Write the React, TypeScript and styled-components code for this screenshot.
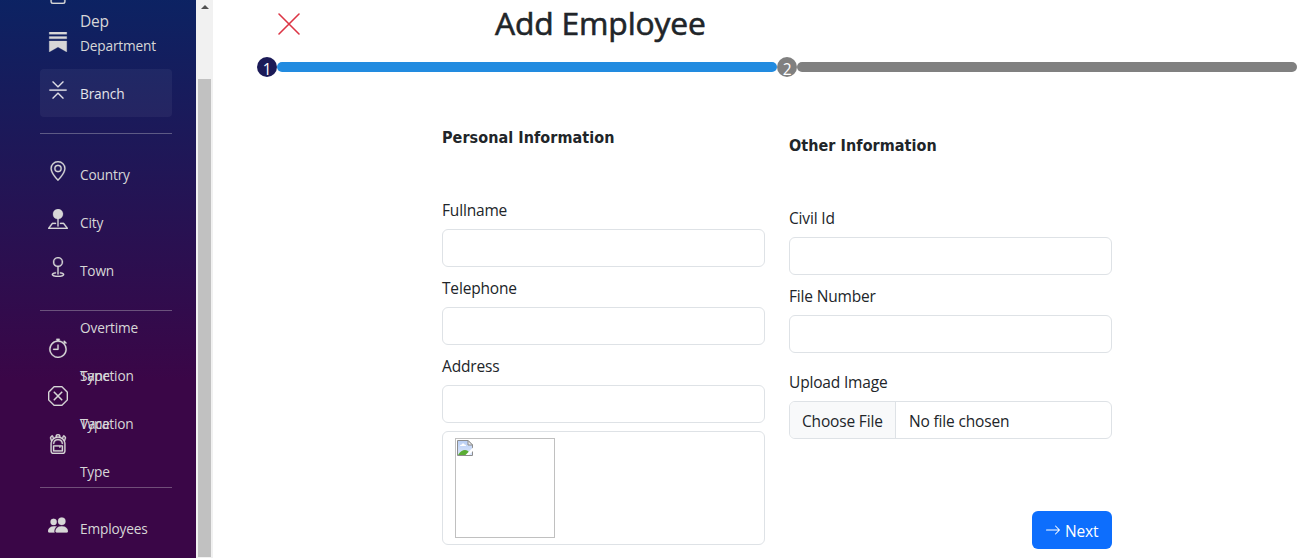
import React from "react";
import styled, { createGlobalStyle } from "styled-components";
import {
  BsArrowRight,
  BsBackpack3,
  BsChevronBarContract,
  BsFile,
  BsGeo,
  BsGeoAlt,
  BsPeopleFill,
  BsPinMapFill,
  BsStopwatch,
  BsSubstack,
  BsXOctagon,
} from "react-icons/bs";

const GlobalStyle = createGlobalStyle`
  *, *::before, *::after { box-sizing: border-box; }
  body {
    margin: 0;
    overflow: hidden;
    background: #fff;
    color: #212529;
    font: 400 15.5px/24px "Segoe UI", "Open Sans", "Noto Sans", sans-serif;
    letter-spacing: -0.17px;
  }
`;

const Page = styled.div`
  display: flex;
  height: 558px;
  overflow: hidden;
`;

const Sidebar = styled.aside`
  width: 196px;
  flex: none;
  padding: 0 24px 0 40px;
  overflow: hidden;
  background: linear-gradient(180deg, rgb(5, 39, 103) -60px, #3a0647 380px);
`;

const Nav = styled.nav`
  display: flex;
  flex-direction: column;
  margin-top: -27px;
`;

const NavItem = styled.a<{ $active?: boolean }>`
  display: flex;
  align-items: center;
  flex: none;
  height: 48px;
  padding-left: 8px;
  gap: 12px;
  border-radius: 4px;
  color: ${(p) => (p.$active ? "#e4e4ea" : "#d7d7d7")};
  background: ${(p) => (p.$active ? "rgba(255, 255, 255, 0.05)" : "transparent")};

  svg {
    flex: none;
    width: 20px;
    height: 20px;
    margin-bottom: 6px;
    stroke: currentColor;
    stroke-width: 0.2px;
  }
`;

const NavLabel = styled.span<{ $large?: boolean }>`
  padding-top: ${(p) => (p.$large ? 0 : 2)}px;
  font-size: ${(p) => (p.$large ? 15.5 : 13.7)}px;
  line-height: 48px;
  white-space: nowrap;
`;

const Divider = styled.hr`
  width: 100%;
  height: 1px;
  margin: 16px 0;
  border: 0;
  background: rgba(215, 215, 215, 0.35);
`;

const ScrollTrack = styled.div`
  display: flex;
  flex-direction: column;
  align-items: center;
  width: 17px;
  flex: none;
  padding: 5px 2px 1px;
  background: #f1f1f1;
`;

const ScrollArrow = styled.span`
  border: 4px solid transparent;
  border-top: 0;
  border-bottom-color: #505050;
`;

const ScrollThumb = styled.div`
  width: 13px;
  flex: 1;
  margin-top: 70px;
  background: #c1c1c1;
`;

const Main = styled.main`
  flex: 1;
  min-width: 0;
  padding-left: 44px;
`;

const Header = styled.header`
  display: flex;
  align-items: center;
  height: 48px;
  padding-left: 18px;
`;

const CloseButton = styled.button`
  display: flex;
  padding: 0;
  border: 0;
  background: none;
  color: #dc3545;
`;

const Title = styled.h2`
  margin: -2px 0 0 192px;
  font-size: 31.8px;
  font-weight: 400;
  line-height: 38px;
  white-space: nowrap;
  -webkit-text-stroke: 0.6px currentColor;
`;

const Steps = styled.div`
  display: flex;
  align-items: center;
  height: 20px;
  margin-top: 9px;
`;

const StepNumber = styled.div<{ $active?: boolean }>`
  width: 20px;
  height: 20px;
  border-radius: 50%;
  background: ${(p) => (p.$active ? "#1b1a57" : "#808080")};
  color: #fff;
  font-size: 15.5px;
  line-height: 24px;
  text-align: center;
`;

const StepBar = styled.div<{ $active?: boolean }>`
  width: 500px;
  height: 10px;
  border-radius: 5px;
  background: ${(p) => (p.$active ? "#228be0" : "#808080")};
`;

const Form = styled.form`
  display: flex;
  gap: 24px;
  padding: 48px 0 0 185px;
`;

const Column = styled.section<{ $offset?: number }>`
  display: flex;
  flex-direction: column;
  width: 323px;
  padding-top: ${(p) => p.$offset ?? 0}px;
`;

const SectionTitle = styled.h3`
  margin: 1px 0 47px;
  font: 700 16px/24px Tahoma, "DejaVu Sans Condensed", sans-serif;
  letter-spacing: 0.06px;
`;

const Field = styled.label<{ $gap?: number }>`
  display: flex;
  flex-direction: column;
  gap: 7px;
  padding-top: 1px;
  margin-bottom: ${(p) => p.$gap ?? 8}px;
`;

const TextInput = styled.input`
  width: 100%;
  height: 38px;
  padding: 6px 12px;
  border: 1px solid #dee2e6;
  border-radius: 6px;
  background: #fff;
  font: inherit;
`;

const FileControl = styled.span`
  display: flex;
  height: 38px;
  overflow: hidden;
  border: 1px solid #dee2e6;
  border-radius: 6px;
  line-height: 38px;
`;

const FileButton = styled.span`
  width: 106px;
  padding-left: 12px;
  border-right: 1px solid #dee2e6;
  background: #f8f9fa;
  white-space: nowrap;
`;

const FileName = styled.span`
  padding-left: 13px;
`;

const Preview = styled.div`
  height: 114px;
  padding: 6px 12px;
  border: 1px solid #dee2e6;
  border-radius: 6px;
`;

const MissingImage = styled.div`
  width: 100px;
  height: 100px;
  padding: 1px;
  border: 1px solid #c0c0c0;

  svg {
    display: block;
  }
`;

const NextButton = styled.button`
  display: flex;
  align-items: center;
  align-self: flex-end;
  gap: 4px;
  width: 80px;
  height: 38px;
  margin-top: 72px;
  padding: 1px 0 0 13px;
  border: 0;
  border-radius: 6px;
  background: #0d6efd;
  color: #fff;
  font: inherit;
  letter-spacing: inherit;

  svg {
    flex: none;
    width: 16px;
    height: 16px;
    margin-bottom: 1px;
  }
`;

const CloseIcon = () => (
  <svg width="28" height="28" viewBox="0 0 28 28" fill="none" stroke="currentColor" strokeWidth="1.6" strokeLinecap="round">
    <path d="M4 4 24 24M24 4 4 24" />
  </svg>
);

const BrokenImageIcon = () => (
  <svg width="16" height="16" viewBox="0 0 16 16">
    <defs>
      <linearGradient id="sky" x1="0" y1="0" x2="0" y2="1">
        <stop offset="0" stopColor="#b9cff5" />
        <stop offset="1" stopColor="#dbe6fb" />
      </linearGradient>
    </defs>
    <path d="M.5.5h10.5l4.500 4.500v10.500H.5z" fill="url(#sky)" stroke="#8c8c8c" />
    <path d="M3 6c0-1.200 1-1.500 1.600-1.300C5 3 7.500 3.200 7.600 4.800 8.600 4.700 9 5.300 9 6z" fill="#fff" />
    <path d="M1 15c2-3.500 4.500-5 7-5 2 0 3.500 1 4 2.500V15z" fill="#5aad35" />
    <path d="M11 .5v4.500h4.500z" fill="#f2f2f2" stroke="#8c8c8c" />
    <path d="M16 7.500 8.500 15h3.500L16 11z" fill="#fff" />
  </svg>
);

export default function App() {
  return (
    <>
      <GlobalStyle />
      <Page>
        <Sidebar>
          <Nav>
            <NavItem>
              <BsFile />
              <NavLabel $large>
                <br />
                Dep
              </NavLabel>
            </NavItem>
            <NavItem>
              <BsSubstack />
              <NavLabel>Department</NavLabel>
            </NavItem>
            <NavItem $active>
              <BsChevronBarContract />
              <NavLabel>Branch</NavLabel>
            </NavItem>
            <Divider />
            <NavItem>
              <BsGeoAlt />
              <NavLabel>Country</NavLabel>
            </NavItem>
            <NavItem>
              <BsPinMapFill />
              <NavLabel>City</NavLabel>
            </NavItem>
            <NavItem>
              <BsGeo />
              <NavLabel>Town</NavLabel>
            </NavItem>
            <Divider />
            <NavItem>
              <BsStopwatch />
              <NavLabel>
                Overtime
                <br />
                Type
              </NavLabel>
            </NavItem>
            <NavItem>
              <BsXOctagon />
              <NavLabel>
                Sanction
                <br />
                Type
              </NavLabel>
            </NavItem>
            <NavItem>
              <BsBackpack3 />
              <NavLabel>
                Vacation
                <br />
                Type
              </NavLabel>
            </NavItem>
            <Divider />
            <NavItem>
              <BsPeopleFill />
              <NavLabel>Employees</NavLabel>
            </NavItem>
          </Nav>
        </Sidebar>
        <ScrollTrack>
          <ScrollArrow />
          <ScrollThumb />
        </ScrollTrack>
        <Main>
          <Header>
            <CloseButton aria-label="Close">
              <CloseIcon />
            </CloseButton>
            <Title>Add Employee</Title>
          </Header>
          <Steps>
            <StepNumber $active>1</StepNumber>
            <StepBar $active />
            <StepNumber>2</StepNumber>
            <StepBar />
          </Steps>
          <Form>
            <Column>
              <SectionTitle>Personal Information</SectionTitle>
              <Field>
                Fullname
                <TextInput />
              </Field>
              <Field>
                Telephone
                <TextInput />
              </Field>
              <Field>
                Address
                <TextInput />
              </Field>
              <Preview>
                <MissingImage>
                  <BrokenImageIcon />
                </MissingImage>
              </Preview>
            </Column>
            <Column $offset={8}>
              <SectionTitle>Other Information</SectionTitle>
              <Field>
                Civil Id
                <TextInput />
              </Field>
              <Field $gap={16}>
                File Number
                <TextInput />
              </Field>
              <Field $gap={0}>
                Upload Image
                <FileControl>
                  <FileButton>Choose File</FileButton>
                  <FileName>No file chosen</FileName>
                </FileControl>
              </Field>
              <NextButton type="button">
                <BsArrowRight />
                Next
              </NextButton>
            </Column>
          </Form>
        </Main>
      </Page>
    </>
  );
}
